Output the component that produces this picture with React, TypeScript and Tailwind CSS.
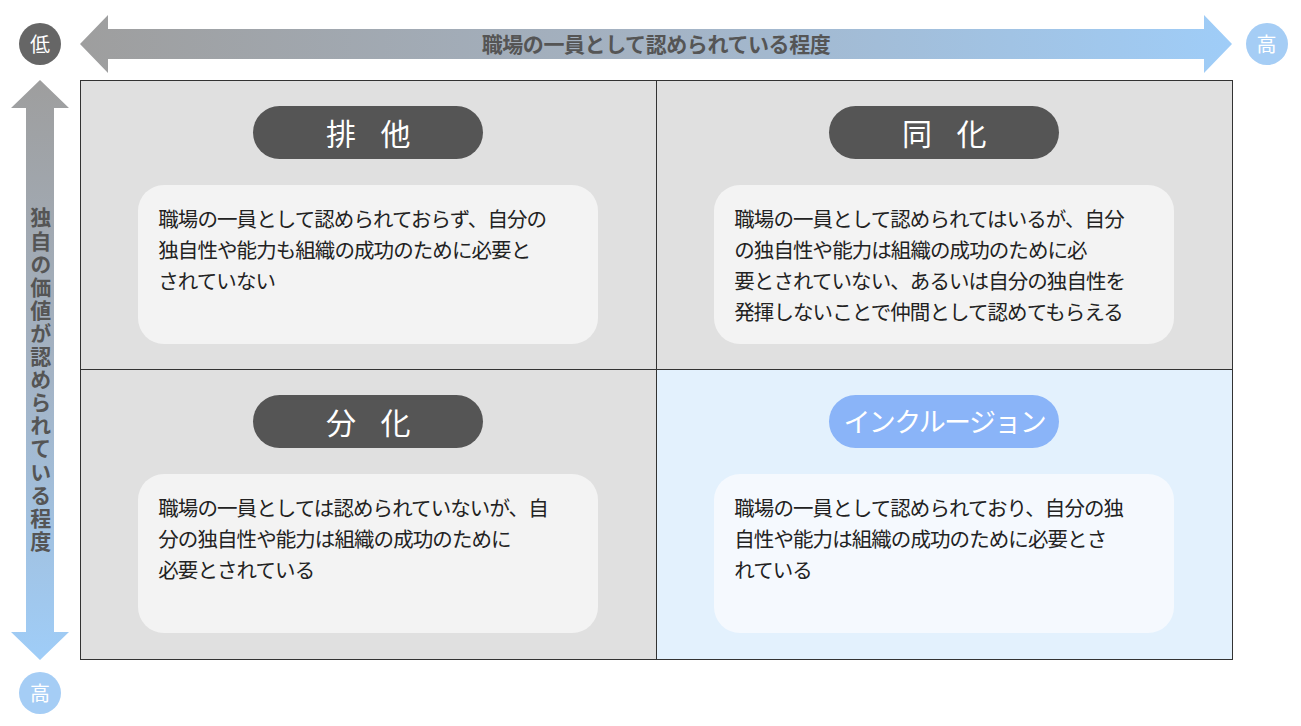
const font = { fontFamily: '"Noto Sans CJK JP", "Noto Sans", sans-serif' };

const quads = [
  { title: '排 他', lines: ['職場の一員として認められておらず、自分の', '独自性や能力も組織の成功のために必要と', 'されていない'], blue: false },
  { title: '同 化', lines: ['職場の一員として認められてはいるが、自分', 'の独自性や能力は組織の成功のために必', '要とされていない、あるいは自分の独自性を', '発揮しないことで仲間として認めてもらえる'], blue: false },
  { title: '分 化', lines: ['職場の一員としては認められていないが、自', '分の独自性や能力は組織の成功のために', '必要とされている'], blue: false },
  { title: 'インクルージョン', lines: ['職場の一員として認められており、自分の独', '自性や能力は組織の成功のために必要とさ', 'れている'], blue: true },
];

function Quadrant({ q, idx }: { q: typeof quads[number]; idx: number }) {
  const borders = ['border-r border-b', 'border-b', 'border-r', ''][idx];
  return (
    <div className={`${borders} border-[#333] ${q.blue ? 'bg-[#e3f1fd]' : 'bg-[#e0e0e0]'} flex flex-col items-center pt-[25px]`}>
      <div className={`w-[230px] h-[53px] rounded-full flex items-center justify-center text-white ${q.blue ? 'bg-[#8ab4f8] text-[27px] tracking-[-0.06em]' : 'bg-[#555] text-[30px] tracking-[0.3em] pl-[0.3em]'}`}>
        {q.title}
      </div>
      <div className={`mt-[26px] w-[460px] h-[159px] rounded-[26px] px-[20px] pt-[18px] text-[20.5px] leading-[31px] text-[#222] tracking-[-0.045em] whitespace-nowrap ${q.blue ? 'bg-[#f5f9fe]' : 'bg-[#f3f3f3]'}`}>
        {q.lines.map((l, i) => <div key={i}>{l}</div>)}
      </div>
    </div>
  );
}

export default function App() {
  return (
    <div className="w-[1301px] h-[726px] bg-white relative" style={font}>
      <div className="flex items-center h-[80px] pt-[8px]">
        <div className="w-[80px] flex justify-center">
          <div className="w-[42px] h-[42px] rounded-full bg-[#666] text-white text-[20px] flex items-center justify-center">低</div>
        </div>
        <div className="relative w-[1152px] h-[58px]">
          <svg width="1152" height="58" viewBox="0 0 1152 58">
            <defs>
              <linearGradient id="h" x1="0" x2="1" y1="0" y2="0">
                <stop offset="0" stopColor="#9e9e9e" />
                <stop offset="0.5" stopColor="#a4b3c4" />
                <stop offset="1" stopColor="#9fcdf8" />
              </linearGradient>
            </defs>
            <path d="M0 29 L28 0 L28 14 L1124 14 L1124 0 L1152 29 L1124 58 L1124 44 L28 44 L28 58 Z" fill="url(#h)" />
          </svg>
          <div className="absolute inset-0 flex items-center justify-center text-[21px] font-bold text-[#555] tracking-[-0.02em]">職場の一員として認められている程度</div>
        </div>
        <div className="flex-1 flex justify-center">
          <div className="w-[42px] h-[42px] rounded-full bg-[#a5cdf5] text-white text-[20px] flex items-center justify-center">高</div>
        </div>
      </div>
      <div className="flex">
        <div className="w-[80px] flex justify-center">
          <div className="relative w-[58px] h-[580px]">
            <svg width="58" height="580" viewBox="0 0 58 580">
              <defs>
                <linearGradient id="v" x1="0" x2="0" y1="0" y2="1">
                  <stop offset="0" stopColor="#9e9e9e" />
                  <stop offset="0.5" stopColor="#a4b3c4" />
                  <stop offset="1" stopColor="#9fcdf8" />
                </linearGradient>
              </defs>
              <path d="M29 0 L58 28 L43 28 L43 552 L58 552 L29 580 L0 552 L15 552 L15 28 L0 28 Z" fill="url(#v)" />
            </svg>
            <div className="absolute inset-0 flex items-center justify-center pt-[20px]">
              <span className="[writing-mode:vertical-rl] text-[21px] font-bold text-[#555] tracking-[0.1em]">独自の価値が認められている程度</span>
            </div>
          </div>
        </div>
        <div className="w-[1153px] h-[580px] border border-[#333] grid grid-cols-2 grid-rows-2">
          {quads.map((q, i) => <Quadrant key={i} q={q} idx={i} />)}
        </div>
      </div>
      <div className="w-[80px] flex justify-center pt-[12px]">
        <div className="w-[42px] h-[42px] rounded-full bg-[#a5cdf5] text-white text-[20px] flex items-center justify-center">高</div>
      </div>
    </div>
  );
}
